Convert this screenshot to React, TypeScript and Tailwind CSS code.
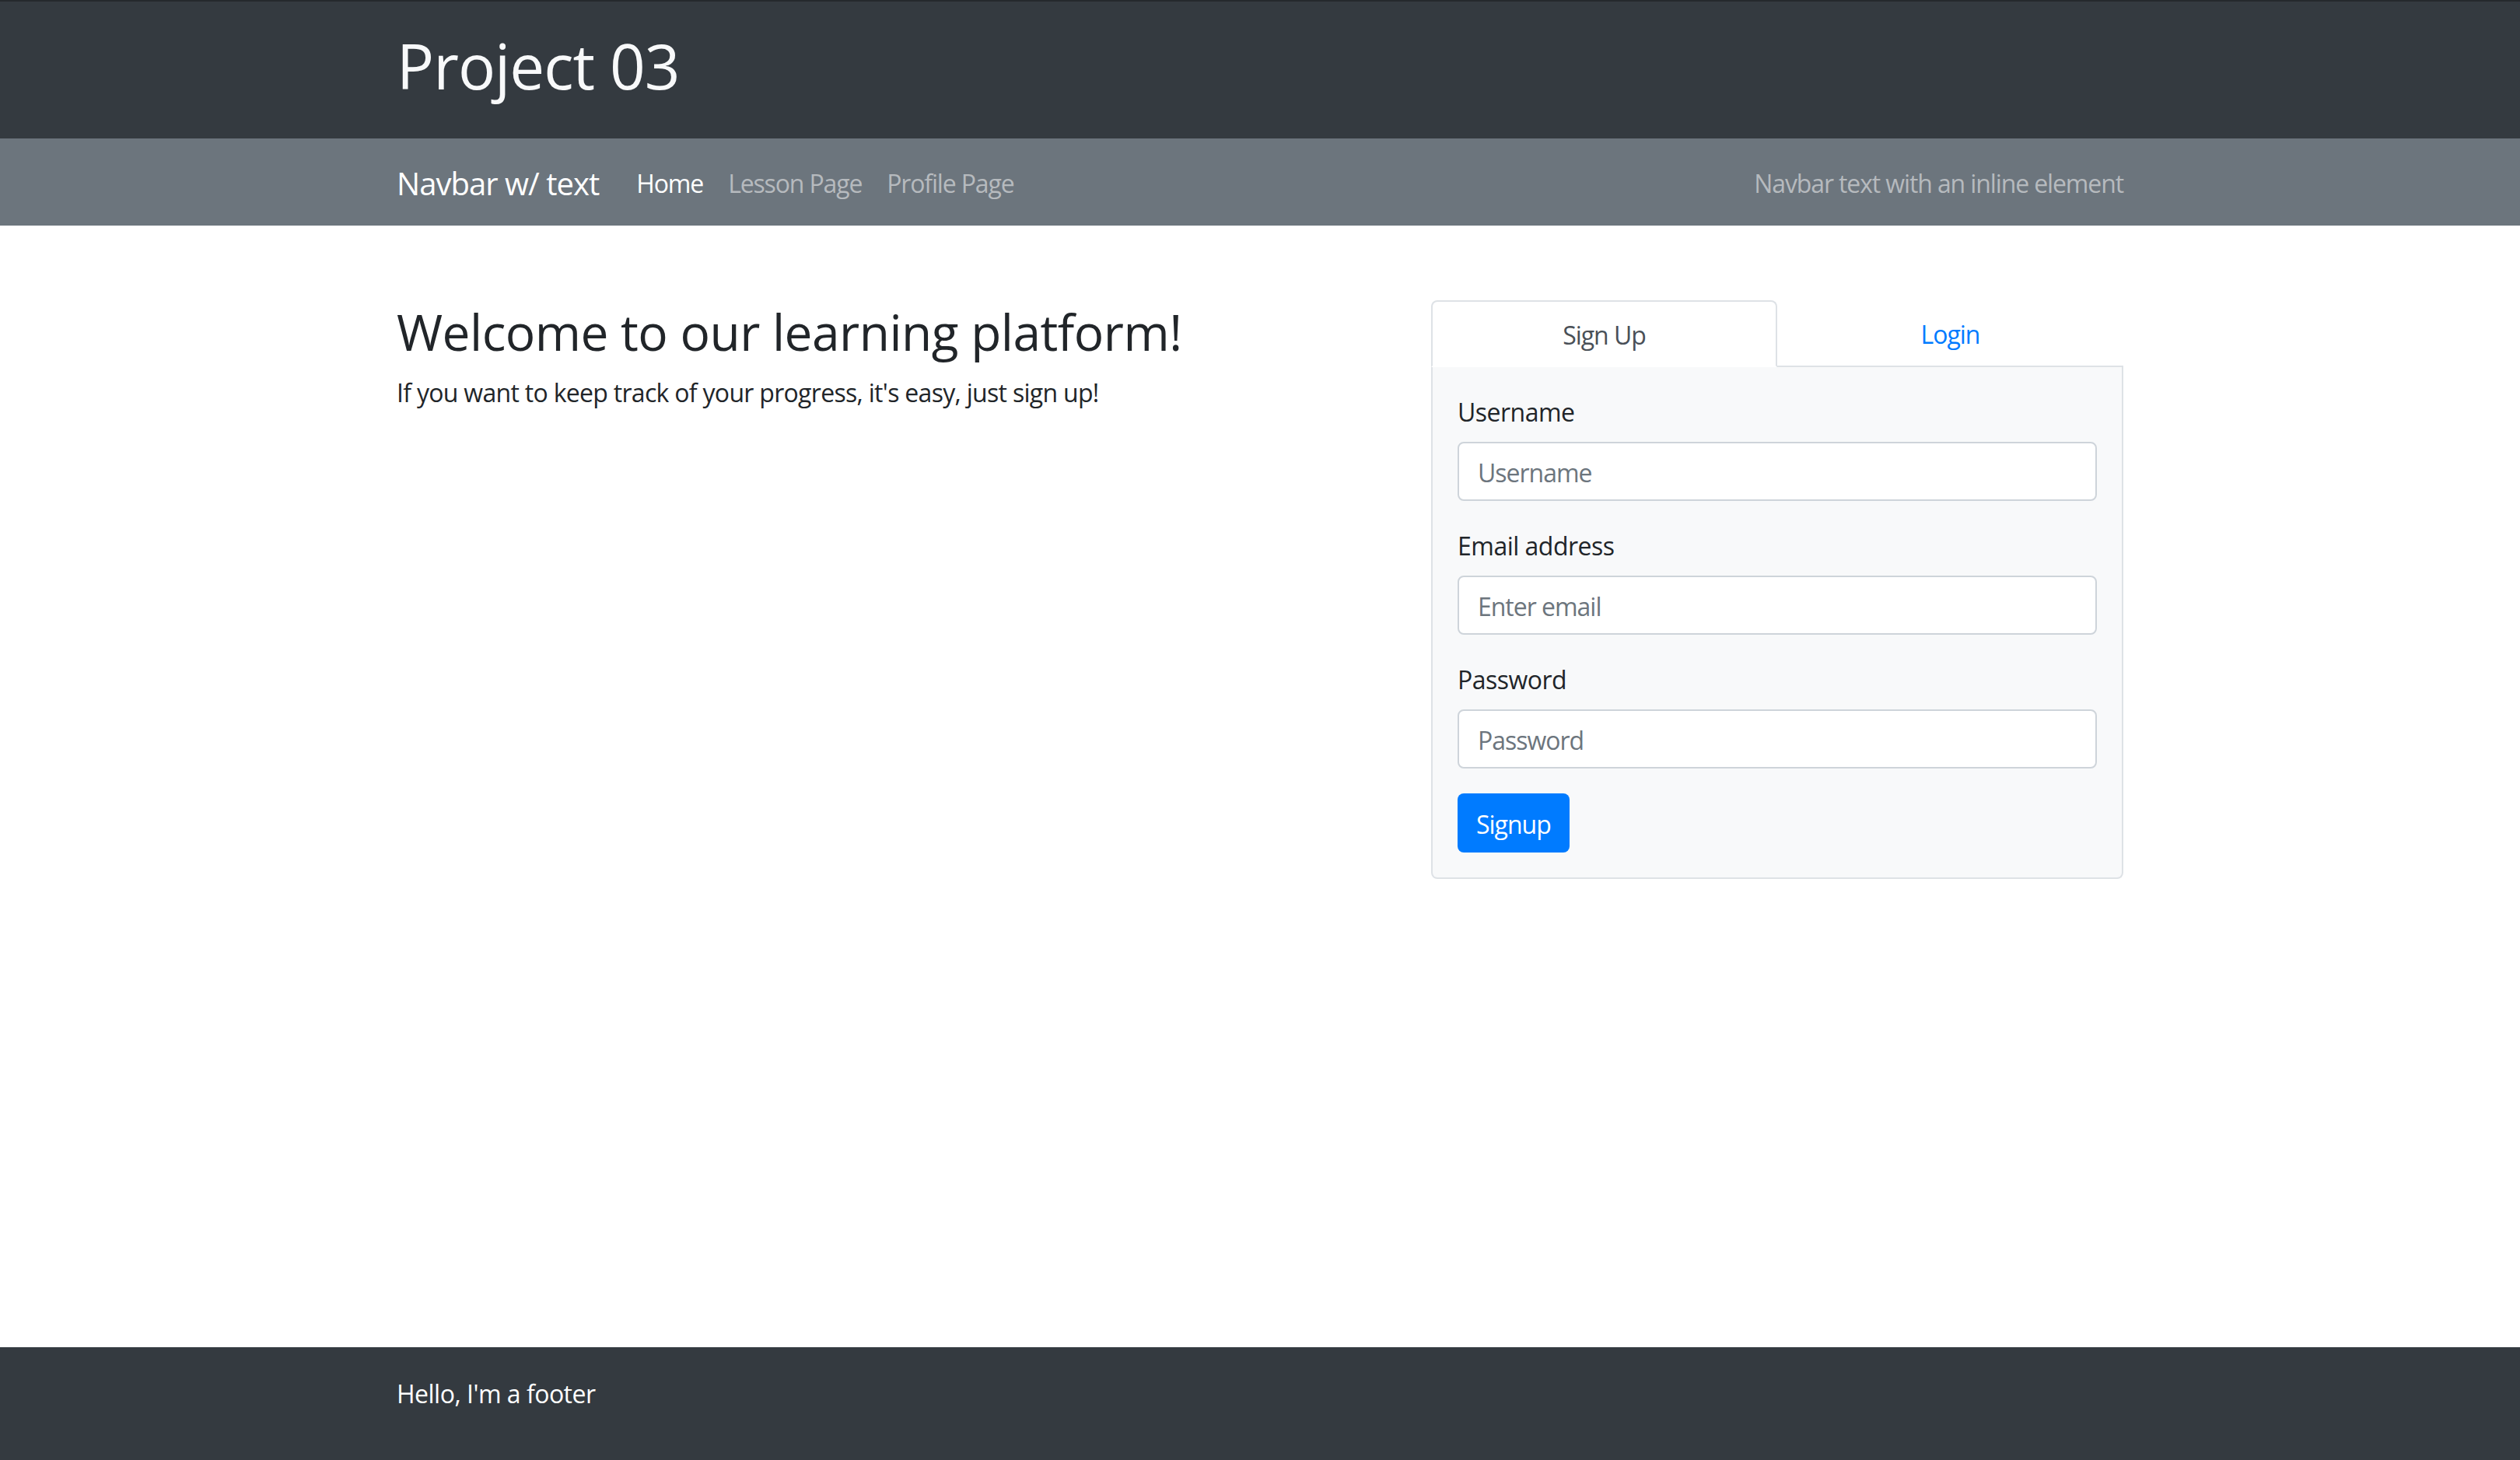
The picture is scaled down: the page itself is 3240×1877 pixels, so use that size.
import React from "react";

const font = { fontFamily: '"Open Sans", "Noto Sans", sans-serif' };

function Field({ label, placeholder, type = "text" }: { label: string; placeholder: string; type?: string }) {
  return (
    <div className="mb-[32px]">
      <label className="block text-[32px] leading-[48px] pt-[2px] mb-[14px] text-[#212529]">{label}</label>
      <input
        type={type}
        placeholder={placeholder}
        className="block w-full h-[76px] px-[24px] pt-[3px] text-[32px] tracking-[-0.032em] bg-white border-[2px] border-[#ced4da] rounded-[8px] text-[#495057] placeholder:text-[#6c757d] outline-none"
      />
    </div>
  );
}

export default function App() {
  return (
    <div className="min-h-screen flex flex-col bg-white tracking-[-0.032em]" style={font}>
      {/* header */}
      <header className="h-[178px] bg-[#343a40] border-t-[2px] border-[#25292d]">
        <div className="w-[2220px] mx-auto pt-[34px]">
          <h1 className="text-[80px] leading-[96px] font-medium tracking-[-0.012em] text-[#f8f9fa]">Project 03</h1>
        </div>
      </header>

      {/* navbar */}
      <nav className="h-[112px] bg-[#6c757d]">
        <div className="w-[2220px] h-full mx-auto pt-[3px] flex items-center">
          <span className="text-[40px] leading-[60px] tracking-[-0.024em] text-white mr-[32px]">Navbar w/ text</span>
          <div className="flex items-center text-[32px] leading-[48px] tracking-[-0.036em]">
            <a className="px-[16px] text-white">Home</a>
            <a className="px-[16px] text-[#b6babe]">Lesson Page</a>
            <a className="px-[16px] text-[#b6babe]">Profile Page</a>
          </div>
          <span className="ml-auto text-[32px] leading-[48px] tracking-[-0.035em] text-[#b6babe]">Navbar text with an inline element</span>
        </div>
      </nav>

      {/* main */}
      <main className="flex-1">
        <div className="w-[2220px] mx-auto pt-[96px] grid grid-cols-[1fr_890px] gap-[60px]">
          <div className="pt-[2px]">
            <h2 className="text-[64px] leading-[77px] font-medium tracking-[-0.008em] text-[#212529] mb-[16px]">Welcome to our learning platform!</h2>
            <p className="text-[32px] leading-[48px] tracking-[-0.7px] text-[#212529]">If you want to keep track of your progress, it's easy, just sign up!</p>
          </div>

          <div>
            <div className="flex border-b-[2px] border-[#dee2e6]">
              <button className="w-1/2 -mb-[2px] pt-[18px] pb-[14px] text-[32px] leading-[48px] tracking-[-0.032em] text-[#495057] bg-white border-[2px] border-[#dee2e6] border-b-white rounded-t-[8px]">
                Sign Up
              </button>
              <button className="w-1/2 pt-[18px] pb-[14px] text-[32px] leading-[48px] tracking-[-0.032em] text-[#007bff] border-[2px] border-transparent">
                Login
              </button>
            </div>
            <form className="bg-[#f8f9fa] border-[2px] border-t-0 border-[#dee2e6] rounded-b-[8px] p-[32px]">
              <Field label="Username" placeholder="Username" />
              <Field label="Email address" placeholder="Enter email" type="email" />
              <Field label="Password" placeholder="Password" type="password" />
              <button type="button" className="h-[76px] px-[24px] pt-[3px] text-[32px] leading-[48px] tracking-[-0.032em] text-white bg-[#007bff] rounded-[8px]">
                Signup
              </button>
            </form>
          </div>
        </div>
      </main>

      {/* footer */}
      <footer className="h-[145px] bg-[#343a40]">
        <div className="w-[2220px] mx-auto pt-[36px]">
          <span className="text-[32px] leading-[48px] text-white">Hello, I'm a footer</span>
        </div>
      </footer>
    </div>
  );
}
